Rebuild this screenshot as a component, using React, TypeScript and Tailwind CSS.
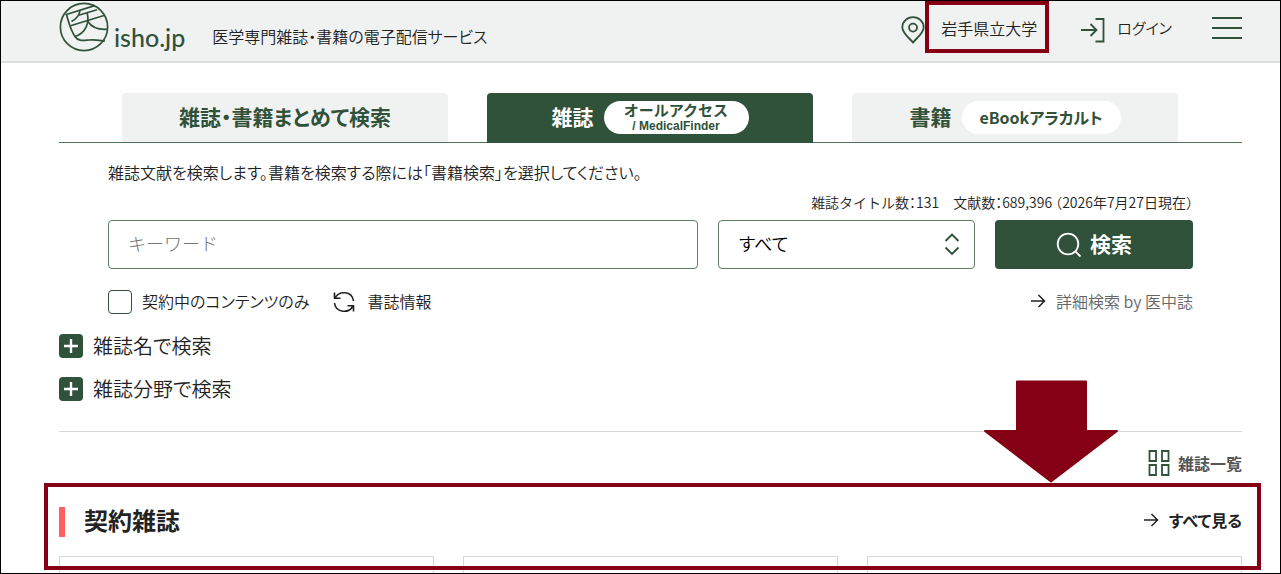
import type { ReactNode } from "react";

function Logo() {
  return (
    <svg viewBox="0 0 50 50" className="size-[50px]" fill="none" stroke="#30513a" strokeWidth="1.7" aria-hidden="true">
      <circle cx="25" cy="25" r="23.6" />
      <path d="M6.5 12.8 L35.7 3.6" />
      <path d="M7.5 12.5 C10 21 11 27 16 34.5 C19 39.5 24 38.5 30 38 C37 37.5 41 38.5 46 39" />
      <path d="M21 8.5 C20.5 13 18 16.5 12.5 19.5" />
      <path d="M19.7 13.2 L38 7.8" />
      <path d="M11.5 23.8 L45 13.5" />
      <path d="M28.2 11 C30.5 21 27 31 16 34.5" />
      <path d="M29 19.5 C33 26 39.5 27.8 48.3 27.2" />
    </svg>
  );
}

function ArrowRight() {
  return (
    <svg viewBox="0 0 16 16" className="size-4" fill="none" stroke="#222" strokeWidth="1.5" aria-hidden="true">
      <path d="M1 8 H14.5 M8.5 2 L14.5 8 L8.5 14" />
    </svg>
  );
}

function Header() {
  return (
    <header className="flex h-[62px] items-start border-b-2 border-[#dcdfdd] bg-[#f0f2f1] pr-[38px] pl-[58px]">
      <a href="#top" className="flex items-end gap-[5px] pt-px text-[#30513a]">
        <Logo />
        <span className="font-['Lato'] text-[25px] leading-[30px] font-medium">isho.jp</span>
      </a>
      <p className="ml-[27px] pt-[23px] leading-6">医学専門雑誌・書籍の電子配信サービス</p>
      <div className="ml-auto flex h-[54px] items-center">
        <a href="#institution" className="flex items-center gap-4">
          <svg viewBox="0 0 24 28" className="mt-1 h-7 w-6" fill="none" stroke="#30513a" strokeWidth="1.8" aria-hidden="true">
            <path d="M12 26.5 C9 22.5 1.3 17.5 1.3 11.3 A10.7 10.2 0 0 1 22.7 11.3 C22.7 17.5 15 22.5 12 26.5 Z" />
            <circle cx="12" cy="11.6" r="4" />
          </svg>
          <span className="relative">
            岩手県立大学
            <span className="pointer-events-none absolute -top-[15px] -right-3 -bottom-[13px] -left-4 border-4 border-[#850014]" />
          </span>
        </a>
        <a href="#login" className="ml-11 flex items-center gap-3 text-[15px]">
          <svg viewBox="0 0 24 26" className="mt-1 h-[26px] w-6" fill="none" stroke="#30513a" strokeWidth="1.8" aria-hidden="true">
            <path d="M0 13 H15 M9.5 7 L15.5 13 L9.5 19" />
            <path d="M14.5 2 H22.5 V24.5 H14.5" />
          </svg>
          ログイン
        </a>
        <button type="button" aria-label="メニュー" className="ml-10 flex w-[30px] flex-col gap-2">
          <span className="h-0.5 bg-[#30513a]" />
          <span className="h-0.5 bg-[#30513a]" />
          <span className="h-0.5 bg-[#30513a]" />
        </button>
      </div>
    </header>
  );
}

function Tab({ active, children }: { active?: boolean; children: ReactNode }) {
  return (
    <button
      type="button"
      role="tab"
      aria-selected={active ?? false}
      className={
        "flex flex-1 items-center justify-center gap-2.5 rounded-t text-[21px] font-bold " +
        (active ? "-mb-px bg-[#30513a] pb-px text-white" : "bg-[#f0f2f1] text-[#30513a]")
      }
    >
      {children}
    </button>
  );
}

function SearchPanel() {
  return (
    <form className="px-[49px]" onSubmit={(e) => e.preventDefault()}>
      <p className="pt-[17px] leading-6">雑誌文献を検索します。書籍を検索する際には「書籍検索」を選択してください。</p>
      <p className="pt-1.5 text-right text-sm leading-6 [font-feature-settings:'halt']">
        雑誌タイトル数：131　文献数：689,396 （2026年7月27日現在）
      </p>
      <div className="mt-1.5 flex h-[49px] gap-5">
        <input
          type="text"
          aria-label="キーワード"
          placeholder="キーワード"
          className="min-w-0 flex-1 rounded border border-[#5f7d67] px-[19px] pb-1 text-lg font-light [font-feature-settings:'halt'] placeholder:text-[#757575]"
        />
        <div className="relative w-[257px]">
          <select aria-label="検索対象" className="size-full appearance-none rounded border border-[#5f7d67] bg-white px-5 pb-1 text-lg text-black">
            <option>すべて</option>
          </select>
          <svg viewBox="0 0 16 24" className="pointer-events-none absolute top-3 right-[15px] h-6 w-4" fill="none" stroke="#30513a" strokeWidth="1.9" aria-hidden="true">
            <path d="M1.5 9 L8 2.5 L14.5 9 M1.5 15.5 L8 22 L14.5 15.5" />
          </svg>
        </div>
        <button type="submit" className="flex w-[198px] items-center justify-center gap-2 rounded bg-[#30513a] text-[21px] font-bold text-white">
          <svg viewBox="0 0 26 26" className="size-[26px]" fill="none" stroke="#fff" strokeWidth="1.8" aria-hidden="true">
            <circle cx="12" cy="12" r="10.3" />
            <path d="M19.3 19.3 L24.5 24.5" />
          </svg>
          <span className="pb-0.5">検索</span>
        </button>
      </div>
      <div className="mt-[21px] flex h-6 items-center">
        <label className="flex items-center gap-2.5">
          <input type="checkbox" className="size-6 appearance-none rounded border-[1.5px] border-[#30513a] checked:bg-[#30513a]" />
          <span className="pb-0.5">契約中のコンテンツのみ</span>
        </label>
        <button type="button" className="ml-6 flex items-center gap-3">
          <svg viewBox="0 0 22 22" className="size-[22px]" fill="none" stroke="#222" strokeWidth="1.6" aria-hidden="true">
            <path d="M1.5 1.5 V7.3 H7.5 M2 7 C6 -0.5 19 -0.5 20.5 10" />
            <path d="M20.5 20.5 V14.7 H14.5 M20 15 C16 22.5 3 22.5 1.5 12" />
          </svg>
          <span className="pb-0.5">書誌情報</span>
        </button>
        <a href="#advanced" className="ml-auto flex items-center gap-2.5 pb-0.5 text-[#666]">
          <ArrowRight />
          詳細検索 by 医中誌
        </a>
      </div>
    </form>
  );
}

function Expander({ label }: { label: string }) {
  return (
    <button type="button" className="flex h-6 items-center gap-2.5 text-xl">
      <svg viewBox="0 0 24 24" className="size-6" aria-hidden="true">
        <rect width="24" height="24" rx="4" fill="#30513a" />
        <path d="M5 12 H19 M12 5 V19" stroke="#fff" strokeWidth="2.4" />
      </svg>
      {label}
    </button>
  );
}

function DownArrow() {
  return (
    <svg viewBox="0 0 136 104" className="pointer-events-none absolute right-[123px] bottom-full h-[104px] w-[136px]" aria-hidden="true">
      <path
        d="M34 2.5 H103 V52 H134 L68 102.5 L2 52 H34 Z"
        fill="#850014"
        stroke="#850014"
        strokeWidth="2"
        strokeLinejoin="round"
      />
    </svg>
  );
}

export default function App() {
  return (
    <div
      id="top"
      lang="ja"
      className="h-screen overflow-hidden border border-black bg-white font-['Noto_Sans_CJK_JP','Noto_Sans',sans-serif] text-base font-[350] text-[#222] [font-feature-settings:'palt']"
    >
      <Header />
      <main className="pr-[38px] pl-[58px]">
        <div role="tablist" className="mt-[30px] flex h-[50px] gap-[39px] border-b border-[#4f7358] pr-16 pl-[63px]">
          <Tab>
            <span className="pb-0.5">雑誌・書籍まとめて検索</span>
          </Tab>
          <Tab active>
            <span className="pb-0.5">雑誌</span>
            <span className="flex h-[33px] w-[145px] flex-col items-center justify-center rounded-full bg-white text-[15px] leading-[17px] text-[#30513a] [font-feature-settings:'halt']">
              <span>オールアクセス</span>
              <span className="font-['Liberation_Sans',sans-serif] text-xs leading-4">/ MedicalFinder</span>
            </span>
          </Tab>
          <Tab>
            <span className="pb-0.5">書籍</span>
            <span className="flex h-[33px] w-[159px] items-center justify-center rounded-full bg-white pb-0.5 text-base">eBookアラカルト</span>
          </Tab>
        </div>
        <SearchPanel />
        <div className="mt-5 flex flex-col items-start gap-[19px] border-b border-[#d8d8d8] pb-[30px]">
          <Expander label="雑誌名で検索" />
          <Expander label="雑誌分野で検索" />
        </div>
        <div className="mt-[18px] flex justify-end">
          <a href="#journals" className="flex items-center gap-2 font-bold text-[#555]">
            <svg viewBox="0 0 22 26" className="h-[26px] w-[22px]" fill="none" stroke="#30513a" strokeWidth="1.8" aria-hidden="true">
              <path d="M1.5 1 H8 V11 H1.5 Z M14 1 H20.5 V11 H14 Z M1.5 15 H8 V25 H1.5 Z M14 15 H20.5 V25 H14 Z" />
            </svg>
            雑誌一覧
          </a>
        </div>
        <section className="relative mt-[7px] pt-6">
          <div className="flex h-[30px] items-center justify-between">
            <h2 className="flex h-full items-center gap-[19px] text-2xl font-bold">
              <span className="h-full w-1.5 bg-[#ff5f5f]" />
              <span className="pb-1">契約雑誌</span>
            </h2>
            <a href="#all" className="flex items-center gap-2.5 pb-1 font-bold">
              <ArrowRight />
              すべて見る
            </a>
          </div>
          <div className="mt-[19px] grid grid-cols-3 gap-[29px]">
            <article className="h-40 border border-[#d8d8d8]" />
            <article className="h-40 border border-[#d8d8d8]" />
            <article className="h-40 border border-[#d8d8d8]" />
          </div>
          <div className="pointer-events-none absolute top-0 -right-[19px] -left-[15px] h-[87px] border-4 border-[#850014]" />
          <DownArrow />
        </section>
      </main>
    </div>
  );
}
